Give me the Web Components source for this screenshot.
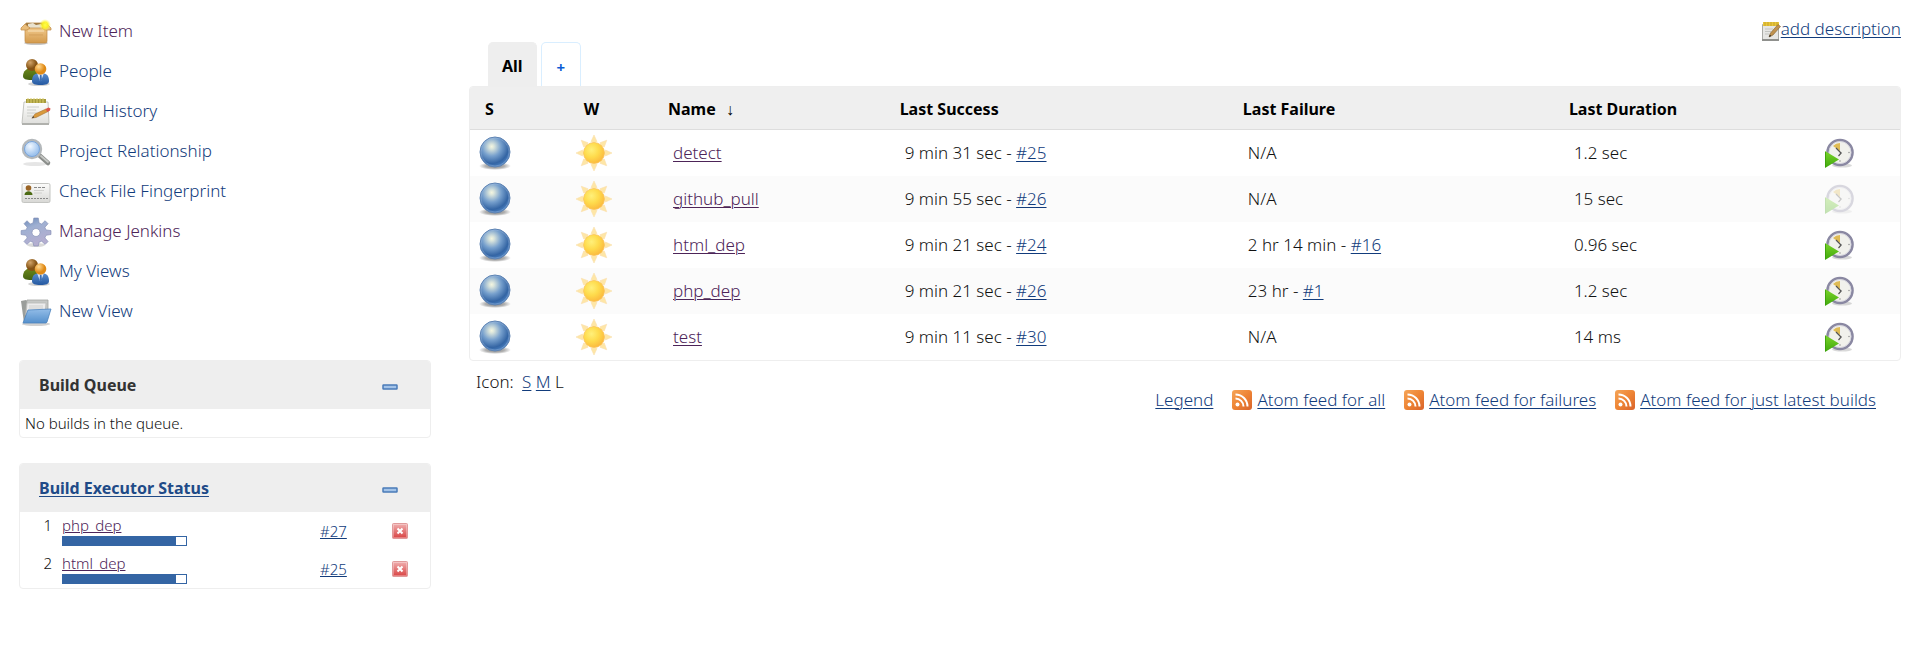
<!DOCTYPE html>
<html lang="en">
<head>
<meta charset="utf-8">
<title>Dashboard [Jenkins]</title>
<style>
  body {
    margin: 0;
    background: #fff;
    color: #111;
    font: 300 17px/24px "Noto Sans", "Open Sans", sans-serif;
    --link: #123c7c;
    --visited: #4d2458;
    --line: #eee;
    --head: #eee;
  }
</style>
</head>
<body>
<jk-page>
  <jk-tasks slot="side">
    <jk-task icon="package" seen>New Item</jk-task>
    <jk-task icon="people">People</jk-task>
    <jk-task icon="notepad">Build History</jk-task>
    <jk-task icon="search">Project Relationship</jk-task>
    <jk-task icon="card">Check File Fingerprint</jk-task>
    <jk-task icon="gear" seen>Manage Jenkins</jk-task>
    <jk-task icon="people">My Views</jk-task>
    <jk-task icon="folder">New View</jk-task>
  </jk-tasks>
  <jk-pane slot="side" heading="Build Queue"><jk-queue></jk-queue></jk-pane>
  <jk-pane slot="side" heading="Build Executor Status" href="#computer"><jk-executors></jk-executors></jk-pane>

  <jk-description></jk-description>
  <jk-tabs></jk-tabs>
  <jk-jobs></jk-jobs>
  <jk-footer></jk-footer>
</jk-page>

<script>
const LINKS = `
  a { color: var(--link); text-decoration: underline; text-decoration-thickness: 1px; text-underline-offset: 2px; }
  a.seen { color: var(--visited); }
  button { margin: 0; padding: 0; border: 0; background: none; font: inherit; display: block; cursor: pointer; }
`;

function define(name, render) {
  customElements.define(name, class extends HTMLElement {
    connectedCallback() {
      if (this.shadowRoot) return;
      this.attachShadow({ mode: 'open' }).innerHTML = render(this);
    }
  });
}

const ICONS = {
  package: [32, 32, `
    <defs><linearGradient id="a" x2="0" y2="1"><stop stop-color="#f0c88b"/><stop offset="1" stop-color="#d39a4c"/></linearGradient>
    <radialGradient id="s"><stop stop-color="#ffff50"/><stop offset=".5" stop-color="#fdf51e" stop-opacity=".9"/><stop offset="1" stop-color="#fff45a" stop-opacity="0"/></radialGradient></defs>
    <ellipse cx="16" cy="28" rx="12" ry="2" fill="#000" opacity=".22"/>
    <path d="M6 8h19l2 5H4z" fill="#9a7640" stroke="#b98948" stroke-width=".8"/>
    <path d="M8 9l5-1 3 2 5-1 3 4H8z" fill="#e9e2cf"/>
    <path d="M5 13h22v13a2 2 0 0 1-2 2H7a2 2 0 0 1-2-2z" fill="url(#a)" stroke="#c18a44" stroke-width=".7"/>
    <path d="M5 9l-4 4v2h6l3-2z M27 9l4 4v2h-6l-3-2z" fill="#e9bd7b" stroke="#c08b46" stroke-width=".7"/>
    <path d="M8 16h16" stroke="#f9e3bb"/><path d="M9 20h14" stroke="#dba964" stroke-width="2"/>
    <circle cx="25" cy="10" r="6" fill="url(#s)"/>`],
  people: [32, 32, `
    <defs><radialGradient id="h1" cx=".35" cy=".3"><stop stop-color="#d2a468"/><stop offset="1" stop-color="#855314"/></radialGradient>
    <radialGradient id="h2" cx=".35" cy=".3"><stop stop-color="#ffdb95"/><stop offset="1" stop-color="#e08a16"/></radialGradient>
    <linearGradient id="b1" x2="0" y2="1"><stop stop-color="#6b8a1c"/><stop offset="1" stop-color="#456211"/></linearGradient>
    <linearGradient id="b2" x2="0" y2="1"><stop stop-color="#5b8fd0"/><stop offset="1" stop-color="#2458a0"/></linearGradient></defs>
    <ellipse cx="19" cy="29" rx="11" ry="2" fill="#000" opacity=".18"/>
    <path d="M3 21c0-5 4-8 8-8s8 3 8 8c0 3-3 4-8 4s-8-1-8-4z" fill="url(#b1)"/>
    <circle cx="12" cy="10" r="6" fill="url(#h1)"/>
    <path d="M12 26c0-6 3-8 8.500-8s8.500 2 8.500 8c0 3-3 4-8.500 4S12 29 12 26z" fill="url(#b2)"/>
    <path d="M17 18h7l-3 8h-1z" fill="#d9e6f7"/><path d="M20 20h1.500l.5 5-1.300 2-1.200-2z" fill="#3c6fb4"/>
    <circle cx="20.500" cy="14" r="5.800" fill="url(#h2)"/>`],
  notepad: [32, 32, `
    <defs><linearGradient id="p" x2="0" y2="1"><stop stop-color="#fdfdfc"/><stop offset="1" stop-color="#dfdfdc"/></linearGradient></defs>
    <path d="M4 7h24l1 21a1 1 0 0 1-1 1H3a1 1 0 0 1-1-1z" fill="url(#p)" stroke="#b6b7b3" stroke-width=".8"/>
    <path d="M2 28h27v2H2z" fill="#b0b1ad"/>
    <path d="M6 4h20v4H6z" fill="#a59a3c"/><path d="M8 3v5M11 3v5M14 3v5M17 3v5M20 3v5M23 3v5" stroke="#dccf6d"/>
    <path d="M7 12h12M7 15h9M7 18h10M7 21h6" stroke="#ccceca"/>
    <path d="M12 23l3-4 11-5 2 2.500-12 6z" fill="#d99a3d" stroke="#a87230" stroke-width=".6"/>
    <path d="M25.500 14l3-1.500 2 1-.5 2-2.500 1.500z" fill="#dd5348"/><path d="M11.500 23.500l2-2.500.8 1.500z" fill="#444"/>`],
  search: [32, 32, `
    <defs><radialGradient id="l" cx=".4" cy=".35"><stop stop-color="#f2f8ff"/><stop offset="1" stop-color="#9fc4ee"/></radialGradient></defs>
    <ellipse cx="15" cy="29" rx="12" ry="2" fill="#000" opacity=".1"/>
    <path d="M19 20l9 8" stroke="#8a8d8a" stroke-width="4.500" stroke-linecap="round"/>
    <path d="M21 21l7 6" stroke="#c5c7c4" stroke-width="1.800" stroke-linecap="round"/>
    <circle cx="12" cy="14" r="9" fill="url(#l)" stroke="#b4b8bb" stroke-width="2.400"/>
    <circle cx="12" cy="14" r="7.500" fill="none" stroke="#7aa5da"/>`],
  card: [32, 32, `
    <defs><linearGradient id="c" x2="0" y2="1"><stop stop-color="#fcfcfb"/><stop offset="1" stop-color="#d8d8d5"/></linearGradient></defs>
    <rect x="2" y="8.500" width="28" height="19" rx="1.500" fill="url(#c)" stroke="#c4c5c2"/>
    <path d="M4.500 20c0-5 8-5 8 0z" fill="#4c6b14"/><circle cx="8.500" cy="13" r="2.800" fill="#9a6425"/>
    <path d="M14 12.500h11" stroke="#888" stroke-dasharray="3 1"/><path d="M14 15.500h10M14 18h8" stroke="#d0d0cd"/>
    <path d="M5 23.500h23" stroke="#888" stroke-dasharray="2 1"/>`],
  gear: [32, 32, `
    <defs><linearGradient id="g" x2=".4" y2="1"><stop stop-color="#6585b6"/><stop offset=".4" stop-color="#9fb0d2"/><stop offset="1" stop-color="#b5aed0"/></linearGradient></defs>
    <ellipse cx="16" cy="30" rx="9" ry="2" fill="#000" opacity=".15"/>
    <path fill-rule="evenodd" d="M13.800 3h4.500l.8 5 2.600 1 3.400-3.300 3 3-3.200 3.500 1.100 2.700 5 .7v3.900l-5 .8-1.100 2.600 3.200 3.600-3 3-3.400-3.300-2.600 1.100-.8 3.700h-4.500l-.8-3.700-2.700-1.100-3.300 3.300-3-3 3.200-3.600-1.100-2.600-5-.8v-3.900l5-.7 1.100-2.700L4 8.700l3-3L10.300 9l2.700-1zM16 13.500a4 4 0 1 0 .01 0z" fill="url(#g)" stroke="#808bb2" stroke-width=".6"/>`],
  folder: [32, 32, `
    <defs><linearGradient id="f" x2="0" y2="1"><stop stop-color="#93bde8"/><stop offset="1" stop-color="#5590cc"/></linearGradient></defs>
    <ellipse cx="16" cy="29" rx="14" ry="2" fill="#000" opacity=".18"/>
    <path d="M1 6l5-1 2 2v21H4z" fill="#9b9e9b"/>
    <path d="M7 5h21v15H5z" fill="#c6c8c6" stroke="#a2a4a1" stroke-width=".8"/>
    <path d="M7 8h19l-1 12H6z" fill="#ececec" stroke="#b9bab8" stroke-width=".8"/><path d="M9 11h14M9 13h14" stroke="#cfd0ce"/>
    <path d="M8 15l23-1-4 13-1 1H3z" fill="url(#f)" stroke="#4c83bd" stroke-width=".8"/>`],
  ball: [34, 34, `
    <defs><radialGradient id="b" cx=".39" cy=".32" r=".7"><stop stop-color="#f4f6e0"/><stop offset=".12" stop-color="#d9e4dc"/><stop offset=".45" stop-color="#77a0cd"/><stop offset=".8" stop-color="#3465a4"/><stop offset="1" stop-color="#4a80c0"/></radialGradient>
    <radialGradient id="d"><stop stop-opacity=".5"/><stop offset=".6" stop-opacity=".3"/><stop offset="1" stop-opacity="0"/></radialGradient></defs>
    <ellipse cx="17" cy="30" rx="16" ry="4" fill="url(#d)"/>
    <circle cx="17" cy="16" r="15" fill="url(#b)" stroke="#5f84b3"/>
    <circle cx="17" cy="16" r="14" fill="none" stroke="#a9c4e4" stroke-opacity=".35"/>`],
  sun: [38, 38, `
    <defs><radialGradient id="u" cx=".38" cy=".35" r=".7"><stop stop-color="#fff07a"/><stop offset=".5" stop-color="#fedb4c"/><stop offset="1" stop-color="#fbb63c"/></radialGradient></defs>
    <g fill="#fee6a6" stroke="#fae0b0" stroke-width=".6">${[0, 45, 90, 135, 180, 225, 270, 315].map(r => `<path transform="rotate(${r} 19 19)" d="M16 7.500L19 1l3 6.500-3 1.500z"/>`).join('')}</g>
    <circle cx="19" cy="19" r="10.500" fill="url(#u)" stroke="#fbc660" stroke-width=".8"/>`],
  schedule: [30, 30, `
    <defs><linearGradient id="t" x2="0" y2="1"><stop stop-color="#7bd52a"/><stop offset="1" stop-color="#3fa80c"/></linearGradient></defs>
    <ellipse cx="17" cy="27.500" rx="10" ry="2" fill="#000" opacity=".15"/>
    <circle cx="15" cy="14.500" r="12.500" fill="#f1f1ec" stroke="#8a88a2" stroke-width="2.600"/>
    <circle cx="15" cy="14.500" r="11" fill="none" stroke="#cfcedb" stroke-width=".8"/>
    <path d="M15 13V5a10 10 0 0 0-7 3z" fill="#dfbb55"/>
    <path d="M11 10l5 5M16.500 14.500l-3 3.500" stroke="#555" stroke-width="1.200"/>
    <circle cx="24" cy="14.500" r=".8" fill="#999"/><circle cx="15" cy="23" r=".8" fill="#999"/>
    <path d="M0 13l14 8.500L0 30z" fill="url(#t)"/><path d="M.5 14v15" stroke="#379a0a" stroke-width=".8"/>`],
  edit: [20, 20, `
    <path d="M1.500 3.500h16v16h-16z" fill="#e6e6e4" stroke="#a9aaa6"/><path d="M1 19h17" stroke="#8f908d" stroke-width="2"/>
    <path d="M2 1h16v4H2z" fill="#e8c63a"/><path d="M4 1v4M7 1v4M10 1v4M13 1v4M16 1v4" stroke="#b8962a" stroke-width=".7"/>
    <path d="M4 8h8M4 10.500h6M4 13h4" stroke="#c3c4c1"/>
    <path d="M8 16l1.500-4L17 3.500l2.500 2L12 14z" fill="#c0924f" stroke="#80602e" stroke-width=".6"/><path d="M8 16l.8-2.300 1.500 1.200z" fill="#222"/>`],
  feed: [20, 20, `
    <defs><linearGradient id="o" x2="1" y2="1"><stop stop-color="#f5a558"/><stop offset=".5" stop-color="#ee8434"/><stop offset="1" stop-color="#d9632b"/></linearGradient></defs>
    <rect width="20" height="20" rx="3" fill="url(#o)"/>
    <circle cx="5.500" cy="14.500" r="2" fill="#fff"/>
    <path d="M3.500 8.500a8 8 0 0 1 8 8M3.500 4.500a12 12 0 0 1 12 12" fill="none" stroke="#fff" stroke-width="2"/>`],
  minus: [16, 16, `<rect x="1" y="6" width="14" height="4" rx=".5" fill="#a3c3e8" stroke="#4a7bb8" stroke-width="1.500"/>`],
  stop: [16, 16, `
    <defs><linearGradient id="x" x2="0" y2="1"><stop stop-color="#f0b2b2"/><stop offset="1" stop-color="#d84040"/></linearGradient></defs>
    <rect x=".5" y=".5" width="15" height="15" rx="1" fill="url(#x)" stroke="#e09a9a"/>
    <rect x="1.500" y="1.500" width="13" height="13" fill="none" stroke="#fff" stroke-opacity=".3"/>
    <path d="M5.500 5.500l5 5M10.500 5.500l-5 5" stroke="#fff" stroke-width="2"/>`]
};

define('jk-icon', el => {
  const [w, h, art] = ICONS[el.getAttribute('name')];
  return `<style>:host { display: block; flex: none; width: ${w}px; height: ${h}px; } svg { display: block; }</style>
    <svg width="${w}" height="${h}" viewBox="0 0 ${w} ${h}" aria-hidden="true">${art}</svg>`;
});

define('jk-page', () => `
  <style>
    :host { display: grid; grid-template-columns: 412px minmax(0, 1fr); gap: 38px; padding: 11px 19px 24px; }
    main { padding-top: 6px; }
  </style>
  <aside><slot name="side"></slot></aside>
  <main><slot></slot></main>`);

define('jk-tasks', () => `
  <style>:host { display: block; margin-bottom: 29px; } nav { display: flex; flex-direction: column; align-items: flex-start; }</style>
  <nav><slot></slot></nav>`);

define('jk-task', el => `
  <style>
    ${LINKS}
    :host { display: block; }
    a { display: flex; align-items: center; gap: 7px; height: 40px; padding-left: 1px; text-decoration: none; }
  </style>
  <a href="#task" class="${el.hasAttribute('seen') ? 'seen' : ''}"><jk-icon name="${el.getAttribute('icon')}"></jk-icon><span><slot></slot></span></a>`);

define('jk-pane', el => {
  const title = el.getAttribute('heading'), href = el.getAttribute('href');
  return `
  <style>
    ${LINKS}
    :host { display: block; margin-bottom: 25px; }
    section { border: 1px solid var(--line); border-radius: 4px; overflow: hidden; font-size: 15px; }
    header { display: flex; align-items: center; justify-content: space-between; height: 48px; padding: 0 32px 0 19px; background: var(--head); }
    h2 { margin: 0; font-size: 16px; font-weight: 700; line-height: 24px; color: #333; }
    h2 a { color: #204a87; }
    button { padding-top: 4px; }
  </style>
  <section>
    <header><h2>${href ? `<a href="${href}">${title}</a>` : title}</h2>
      <button type="button" aria-label="Collapse ${title}"><jk-icon name="minus"></jk-icon></button></header>
    <slot></slot>
  </section>`;
});

define('jk-queue', () => `
  <style>:host { display: block; padding: 2px 5px; }</style>
  No builds in the queue.`);

define('jk-executors', () => `
  <style>
    ${LINKS}
    :host { display: block; }
    table { width: 100%; table-layout: fixed; border-collapse: collapse; line-height: 22px; }
    col.no { width: 42px; } col.build { width: 72px; } col.stop { width: 38px; }
    tr { height: 38px; }
    td { padding: 0; }
    td.no { vertical-align: top; text-align: right; padding: 2px 10px 0 0; }
    td.job { padding: 2px 0 4px; }
    a { text-underline-offset: 1px; }
    .job a { display: block; width: max-content; }
    .bar { width: 125px; height: 10px; box-sizing: border-box; border: 1px solid #3465a4; background: #fff; }
    .bar i { display: block; width: 92%; height: 100%; background: #3465a4; }
  </style>
  <table>
    <colgroup><col class="no"><col><col class="build"><col class="stop"></colgroup>
    ${[[1, 'php_dep', 27], [2, 'html_dep', 25]].map(([n, job, b]) => `
    <tr><td class="no">${n}</td>
      <td class="job"><a class="seen" href="#${job}">${job}</a><div class="bar" role="progressbar" aria-label="${job}" aria-valuenow="92"><i></i></div></td>
      <td><a href="#${job}-${b}">#${b}</a></td>
      <td><button type="button" aria-label="Stop ${job}"><jk-icon name="stop"></jk-icon></button></td></tr>`).join('')}
  </table>`);

define('jk-description', () => `
  <style>
    ${LINKS}
    :host { display: flex; justify-content: flex-end; height: 25px; }
    a { display: flex; }
    jk-icon { padding-top: 4px; }
  </style>
  <a href="#description"><jk-icon name="edit"></jk-icon><span>add description</span></a>`);

define('jk-tabs', () => `
  <style>
    ${LINKS}
    :host { display: block; }
    nav { display: flex; gap: 4px; padding-left: 19px; }
    a { box-sizing: border-box; height: 44px; padding: 11px 13px 0; border: 1px solid var(--head); border-bottom: 0; border-radius: 5px 5px 0 0;
      font-size: 16px; font-weight: 700; color: #000; background: var(--head); text-decoration: none; }
    a.add { padding: 12px 15px 0; font-size: 15px; color: #0b5cd5; background: #fff; border-color: #d9eeff; }
  </style>
  <nav><a href="#all" aria-current="page">All</a><a class="add" href="#new-view">+</a></nav>`);

const JOBS = [
  ['detect', '9 min 31 sec', 25, 'N/A', 0, '1.2 sec'],
  ['github_pull', '9 min 55 sec', 26, 'N/A', 0, '15 sec', true],
  ['html_dep', '9 min 21 sec', 24, '2 hr 14 min', 16, '0.96 sec'],
  ['php_dep', '9 min 21 sec', 26, '23 hr', 1, '1.2 sec'],
  ['test', '9 min 11 sec', 30, 'N/A', 0, '14 ms']
];
const when = (text, build) => build ? `${text} - <a href="#build-${build}">#${build}</a>` : text;

define('jk-jobs', () => `
  <style>
    ${LINKS}
    :host { display: block; border: 1px solid var(--line); border-radius: 4px; overflow: hidden; }
    table { width: 100%; table-layout: fixed; border-spacing: 0; }
    th { height: 40px; padding: 2px 15px 0; border-bottom: 1px solid #ddd; background: #efefef; color: #000; font-size: 16px; font-weight: 700; text-align: left; }
    th span { padding-left: 6px; font-weight: 400; }
    td { height: 46px; padding: 0 20px; }
    tbody tr:nth-child(even) { background: #fbfbfb; }
    td.status { padding: 0 8px; }
    td.weather { padding: 0 6px; }
    td.run { padding: 0 15px; }
    button[disabled] { opacity: .3; }
  </style>
  <table>
    <colgroup><col style="width:6.9%"><col style="width:5.9%"><col style="width:16.2%"><col style="width:24%"><col style="width:22.8%"><col style="width:17.9%"><col></colgroup>
    <thead><tr><th>S</th><th>W</th><th>Name <span>↓</span></th><th>Last Success</th><th>Last Failure</th><th>Last Duration</th><th></th></tr></thead>
    <tbody>${JOBS.map(([name, ok, okNo, bad, badNo, time, off]) => `
      <tr><td class="status"><jk-icon name="ball"></jk-icon></td><td class="weather"><jk-icon name="sun"></jk-icon></td>
        <td><a class="seen" href="#${name}">${name}</a></td><td>${when(ok, okNo)}</td><td>${when(bad, badNo)}</td><td>${time}</td>
        <td class="run"><button type="button" aria-label="Schedule a build of ${name}" ${off ? 'disabled' : ''}><jk-icon name="schedule"></jk-icon></button></td></tr>`).join('')}
    </tbody>
  </table>`);

define('jk-footer', () => `
  <style>
    ${LINKS}
    :host { display: flex; justify-content: space-between; padding: 9px 25px 0 7px; }
    .sizes a:first-of-type { margin-left: 4px; }
    .feeds { display: flex; gap: 19px; padding-top: 18px; }
    .feed { display: flex; align-items: center; gap: 5px; }
  </style>
  <div class="sizes">Icon: <a href="#s">S</a> <a href="#m">M</a> L</div>
  <div class="feeds"><a href="#legend">Legend</a>
    ${['all', 'failures', 'just latest builds'].map(t => `<span class="feed"><jk-icon name="feed"></jk-icon><a href="#feed">Atom feed for ${t}</a></span>`).join('')}
  </div>`);
</script>
</body>
</html>
